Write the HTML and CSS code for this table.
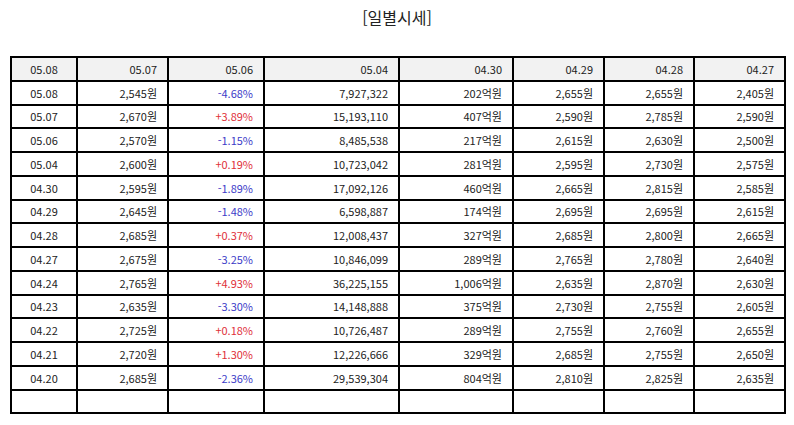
FILE: index.html
```html
<!DOCTYPE html>
<html lang="ko">
<head>
<meta charset="utf-8">
<link rel="stylesheet" href="styles.css">
</head>
<body>
<div class="page">
  <h1 class="title">[일별시세]</h1>
  <table class="prices">
    <colgroup>
      <col class="c1"><col class="c2"><col class="c3"><col class="c4">
      <col class="c5"><col class="c6"><col class="c7"><col class="c8">
    </colgroup>
    <thead>
      <tr><th class="date">05.08</th><th>05.07</th><th>05.06</th><th>05.04</th><th>04.30</th><th>04.29</th><th>04.28</th><th>04.27</th></tr>
    </thead>
    <tbody>
      <tr><td class="date">05.08</td><td>2,545원</td><td class="down">-4.68%</td><td>7,927,322</td><td>202억원</td><td>2,655원</td><td>2,655원</td><td>2,405원</td></tr>
      <tr><td class="date">05.07</td><td>2,670원</td><td class="up">+3.89%</td><td>15,193,110</td><td>407억원</td><td>2,590원</td><td>2,785원</td><td>2,590원</td></tr>
      <tr><td class="date">05.06</td><td>2,570원</td><td class="down">-1.15%</td><td>8,485,538</td><td>217억원</td><td>2,615원</td><td>2,630원</td><td>2,500원</td></tr>
      <tr><td class="date">05.04</td><td>2,600원</td><td class="up">+0.19%</td><td>10,723,042</td><td>281억원</td><td>2,595원</td><td>2,730원</td><td>2,575원</td></tr>
      <tr><td class="date">04.30</td><td>2,595원</td><td class="down">-1.89%</td><td>17,092,126</td><td>460억원</td><td>2,665원</td><td>2,815원</td><td>2,585원</td></tr>
      <tr><td class="date">04.29</td><td>2,645원</td><td class="down">-1.48%</td><td>6,598,887</td><td>174억원</td><td>2,695원</td><td>2,695원</td><td>2,615원</td></tr>
      <tr><td class="date">04.28</td><td>2,685원</td><td class="up">+0.37%</td><td>12,008,437</td><td>327억원</td><td>2,685원</td><td>2,800원</td><td>2,665원</td></tr>
      <tr><td class="date">04.27</td><td>2,675원</td><td class="down">-3.25%</td><td>10,846,099</td><td>289억원</td><td>2,765원</td><td>2,780원</td><td>2,640원</td></tr>
      <tr><td class="date">04.24</td><td>2,765원</td><td class="up">+4.93%</td><td>36,225,155</td><td>1,006억원</td><td>2,635원</td><td>2,870원</td><td>2,630원</td></tr>
      <tr><td class="date">04.23</td><td>2,635원</td><td class="down">-3.30%</td><td>14,148,888</td><td>375억원</td><td>2,730원</td><td>2,755원</td><td>2,605원</td></tr>
      <tr><td class="date">04.22</td><td>2,725원</td><td class="up">+0.18%</td><td>10,726,487</td><td>289억원</td><td>2,755원</td><td>2,760원</td><td>2,655원</td></tr>
      <tr><td class="date">04.21</td><td>2,720원</td><td class="up">+1.30%</td><td>12,226,666</td><td>329억원</td><td>2,685원</td><td>2,755원</td><td>2,650원</td></tr>
      <tr><td class="date">04.20</td><td>2,685원</td><td class="down">-2.36%</td><td>29,539,304</td><td>804억원</td><td>2,810원</td><td>2,825원</td><td>2,635원</td></tr>
      <tr><td class="date"></td><td></td><td></td><td></td><td></td><td></td><td></td><td></td></tr>
    </tbody>
  </table>
</div>
</body>
</html>
```
FILE: styles.css
```css
html, body {
  margin: 0;
  padding: 0;
  background: #fff;
}
.page {
  padding: 5px 10px 0 10px;
  font-family: "Noto Sans CJK KR", "Noto Sans", sans-serif;
  color: #222;
}
.title {
  margin: 0 0 26px 0;
  height: 25px;
  line-height: 25px;
  text-align: center;
  font-size: 16px;
  font-weight: normal;
  color: #222;
}
.prices {
  width: 776px;
  table-layout: fixed;
  border-collapse: separate;
  border-spacing: 0;
  border: 1px solid #000;
  font-size: 11px;
}
.c1 { width: 66px; }
.c2 { width: 91px; }
.c3 { width: 96px; }
.c4 { width: 135px; }
.c5 { width: 114px; }
.c6 { width: 91px; }
.c7 { width: 90px; }
.c8 { width: 91px; }
.prices th,
.prices td {
  box-sizing: border-box;
  height: 23.75px;
  padding: 0 10px 0 4px;
  border: 1px solid #000;
  text-align: right;
  font-weight: normal;
  line-height: 14px;
  white-space: nowrap;
}
.prices th {
  background: #f2f2f2;
}
.prices tr > .date {
  text-align: center;
  padding-left: 0;
  padding-right: 0;
}
.prices .up { color: #e0303a; }
.prices .down { color: #3c3cc8; }
```
